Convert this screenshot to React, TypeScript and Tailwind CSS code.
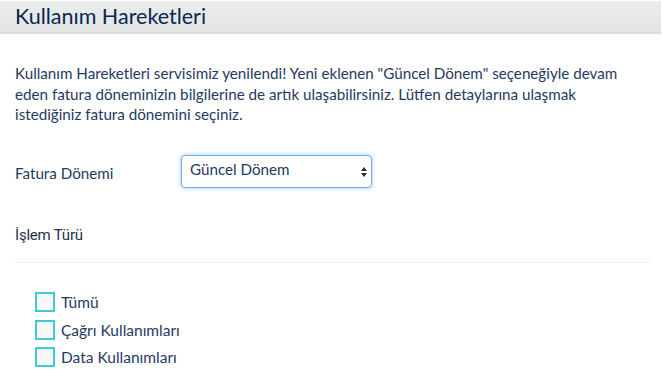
import { useState } from "react";

const options = ["Tümü", "Çağrı Kullanımları", "Data Kullanımları"];

export default function App() {
    const [period, setPeriod] = useState("current");
    const [checked, setChecked] = useState<string[]>([]);

    const toggle = (name: string) => {
        setChecked((prev) => (prev.includes(name) ? prev.filter((n) => n !== name) : [...prev, name]));
    };

    return (
        <div className="w-[662px] h-[371px] bg-white overflow-hidden font-['Lato',sans-serif] text-[#1d3557]">
            {/* header bar */}
            <div className="mt-px mr-px h-[33px] bg-gradient-to-b from-[#ebeded] to-[#e4e6e6] border-b-2 border-[#d9dcdc] flex items-center px-[15px]">
                <h1 className="text-[21.5px] text-[#0b2750] leading-none">Kullanım Hareketleri</h1>
            </div>

            <div className="px-[15px]">
                {/* info text */}
                <p className="mt-[29px] text-[15.2px] leading-[20.5px] text-[#1f3a5f] pr-[20px]">
                    Kullanım Hareketleri servisimiz yenilendi! Yeni eklenen "Güncel Dönem" seçeneğiyle devam eden fatura
                    döneminizin bilgilerine de artık ulaşabilirsiniz. Lütfen detaylarına ulaşmak istediğiniz fatura
                    dönemini seçiniz.
                </p>

                {/* period select */}
                <div className="mt-[30px] flex items-center">
                    <label className="w-[166px] text-[15.2px] text-[#1f3a5f] pt-[5px]">Fatura Dönemi</label>
                    <div className="relative w-[191px] h-[33px] rounded-[4px] border border-[#6aaef0] shadow-[0_0_4px_rgba(80,150,230,0.5)] bg-white">
                        <select
                            value={period}
                            onChange={(e) => setPeriod(e.target.value)}
                            className="appearance-none w-full h-full bg-transparent pl-[8px] pr-6 pb-[3px] text-[15.2px] text-[#1f3a5f] outline-none"
                        >
                            <option value="current">Güncel Dönem</option>
                        </select>
                        <svg className="absolute right-[4px] top-[11px] pointer-events-none" width="6" height="10" viewBox="0 0 6 10">
                            <path d="M3 0 L6 4 H0 Z" fill="#1f2a3a" />
                            <path d="M0 6 H6 L3 10 Z" fill="#1f2a3a" />
                        </svg>
                    </div>
                </div>

                {/* type */}
                <div className="mt-[36px] text-[15px] font-['Roboto',sans-serif] text-[#23334a] tracking-[-0.2px]">İşlem Türü</div>
                <div className="mt-[16px] mr-[-3px] h-px bg-[#eeeeee]" />

                <div className="mt-[29px] pl-[20px] flex flex-col gap-[7.5px]">
                    {options.map((o) => (
                        <label key={o} className="flex items-center gap-[6px] cursor-pointer" onClick={() => toggle(o)}>
                            <span className="w-[20px] h-[20px] border-2 border-[#3fcbd3] bg-[#f8f8f8] flex items-center justify-center">
                                {checked.includes(o) && <span className="w-[10px] h-[10px] bg-[#3fcbd3]" />}
                            </span>
                            <span className="text-[15.5px] text-[#1f3a5f] leading-[20px]">{o}</span>
                        </label>
                    ))}
                </div>
            </div>
        </div>
    );
}
